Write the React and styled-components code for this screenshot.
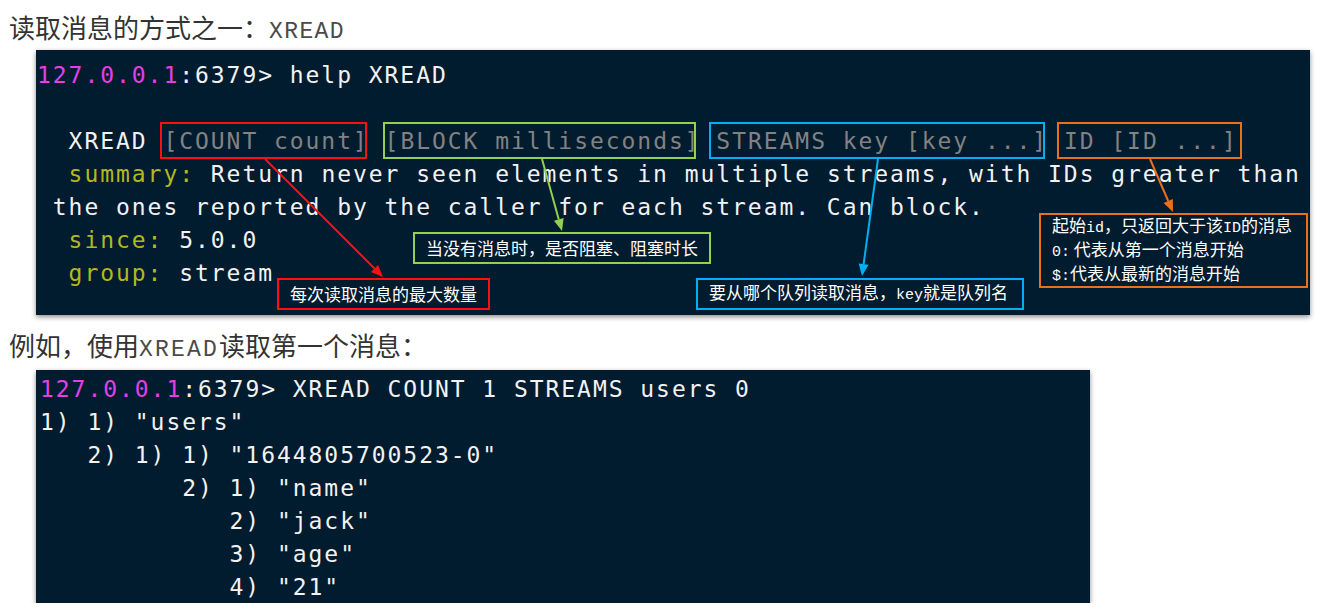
import styled, { createGlobalStyle } from "styled-components"

const GlobalStyle = createGlobalStyle`
  body {
    margin: 0;
    background: #ffffff;
  }
`

const Page = styled.div`
  display: flex;
  flex-direction: column;
  align-items: flex-start;
  padding-top: 10px;
`

const Heading = styled.h2`
  height: 34px;
  margin: ${p => (p.$first ? "0 0 6px" : "13px 0 8px")};
  padding-left: 9px;
  font: 400 26px/34px "Noto Sans CJK SC", sans-serif;
  color: #333333;
  white-space: nowrap;
`

const Code = styled.span`
  font-family: "Liberation Mono", monospace;
  font-size: 23px;
  line-height: 0;
  letter-spacing: ${p => p.$spacing || "1.4px"};
  color: #4a4a4a;
`

const Terminal = styled.div`
  position: relative;
  margin-left: 36px;
  width: ${p => p.$width}px;
  height: ${p => p.$height}px;
  box-sizing: border-box;
  padding: ${p => p.$pad};
  background: #011b2f;
  box-shadow: 0 2px 5px rgba(0, 0, 0, 0.45);
  font: 400 23px/33px "DejaVu Sans Mono", monospace;
  letter-spacing: 1.95px;
  color: #f2f2f2;
`

const Line = styled.div`
  height: 33px;
  white-space: pre;
`

const Host = styled.span`
  color: #e43fe6;
`

const Param = styled.span`
  color: #828282;
`

const Field = styled.span`
  color: #b3b820;
`

const Overlay = styled.div`
  position: absolute;
  inset: 0;
  pointer-events: none;
`

const Arrows = styled.svg`
  position: absolute;
  inset: 0;
  width: 100%;
  height: 100%;
  overflow: visible;
`

const Mark = styled.div`
  position: absolute;
  left: ${p => p.$x}px;
  top: ${p => p.$y}px;
  width: ${p => p.$w}px;
  height: ${p => p.$h}px;
  box-sizing: border-box;
  border: 2px solid ${p => p.$color};
`

const Note = styled(Mark)`
  display: flex;
  flex-direction: column;
  justify-content: center;
  padding-left: 11px;
  font: 400 17px/20px "Noto Sans CJK SC", sans-serif;
  letter-spacing: 0;
  color: #ffffff;
  white-space: pre;
`

const Latin = styled.span`
  font-family: "Liberation Mono", monospace;
  font-size: 15px;
`

const Arrow = ({ from, to, color }) => {
  const [x1, y1] = from
  const [x2, y2] = to
  const a = Math.atan2(y2 - y1, x2 - x1)
  const len = 12
  const half = 5
  const bx = x2 - len * Math.cos(a)
  const by = y2 - len * Math.sin(a)
  const px = -Math.sin(a) * half
  const py = Math.cos(a) * half
  return (
    <g>
      <line x1={x1} y1={y1} x2={bx} y2={by} stroke={color} strokeWidth="2" />
      <polygon
        points={`${x2},${y2} ${bx + px},${by + py} ${bx - px},${by - py}`}
        fill={color}
      />
    </g>
  )
}

const RED = "#ff1010"
const GREEN = "#92d050"
const BLUE = "#00b0f0"
const ORANGE = "#e8711c"

const App = () => {
  return (
    <Page>
      <GlobalStyle />
      <Heading $first>
        读取消息的方式之一：<Code>XREAD</Code>
      </Heading>
      <Terminal $width={1274} $height={265} $pad="9px 0 0 1px">
        <Line>
          <Host>127.0.0.1</Host>:6379&gt; help XREAD
        </Line>
        <Line> </Line>
        <Line>
          {"  XREAD "}
          <Param>[COUNT count]</Param> <Param>[BLOCK milliseconds]</Param>{" "}
          <Param>STREAMS key [key ...]</Param> <Param>ID [ID ...]</Param>
        </Line>
        <Line>
          {"  "}
          <Field>summary:</Field> Return never seen elements in multiple streams, with IDs greater than
        </Line>
        <Line>{" the ones reported by the caller for each stream. Can block."}</Line>
        <Line>
          {"  "}
          <Field>since:</Field> 5.0.0
        </Line>
        <Line>
          {"  "}
          <Field>group:</Field> stream
        </Line>

        <Overlay>
          <Mark $x={124} $y={72} $w={207} $h={37} $color={RED} />
          <Mark $x={347} $y={72} $w={313} $h={37} $color={GREEN} />
          <Mark $x={673} $y={72} $w={336} $h={37} $color={BLUE} />
          <Mark $x={1021} $y={72} $w={185} $h={37} $color={ORANGE} />

          <Arrows>
            <Arrow from={[229, 109]} to={[347, 227]} color={RED} />
            <Arrow from={[506, 109]} to={[526, 181]} color={GREEN} />
            <Arrow from={[842, 109]} to={[826, 226]} color={BLUE} />
            <Arrow from={[1114, 109]} to={[1137, 162]} color={ORANGE} />
          </Arrows>

          <Note $x={241} $y={228} $w={213} $h={32} $color={RED}>
            每次读取消息的最大数量
          </Note>
          <Note $x={377} $y={182} $w={298} $h={32} $color={GREEN}>
            当没有消息时，是否阻塞、阻塞时长
          </Note>
          <Note $x={660} $y={228} $w={328} $h={32} $color={BLUE}>
            <span>
              要从哪个队列读取消息，<Latin>key</Latin>就是队列名
            </span>
          </Note>
          <Note $x={1003} $y={163} $w={269} $h={75} $color={ORANGE}>
            <span>
              起始<Latin>id</Latin>，只返回大于该<Latin>ID</Latin>的消息
            </span>
            <span>
              <Latin>0:</Latin> 代表从第一个消息开始
            </span>
            <span>
              <Latin>$:</Latin>代表从最新的消息开始
            </span>
          </Note>
        </Overlay>
      </Terminal>

      <Heading>
        例如，使用<Code $spacing="2.2px">XREAD</Code>读取第一个消息：
      </Heading>
      <Terminal $width={1054} $height={233} $pad="3px 0 0 4px">
        <Line>
          <Host>127.0.0.1</Host>:6379&gt; XREAD COUNT 1 STREAMS users 0
        </Line>
        <Line>{'1) 1) "users"'}</Line>
        <Line>{'   2) 1) 1) "1644805700523-0"'}</Line>
        <Line>{'         2) 1) "name"'}</Line>
        <Line>{'            2) "jack"'}</Line>
        <Line>{'            3) "age"'}</Line>
        <Line>{'            4) "21"'}</Line>
      </Terminal>
    </Page>
  )
}

export default App
